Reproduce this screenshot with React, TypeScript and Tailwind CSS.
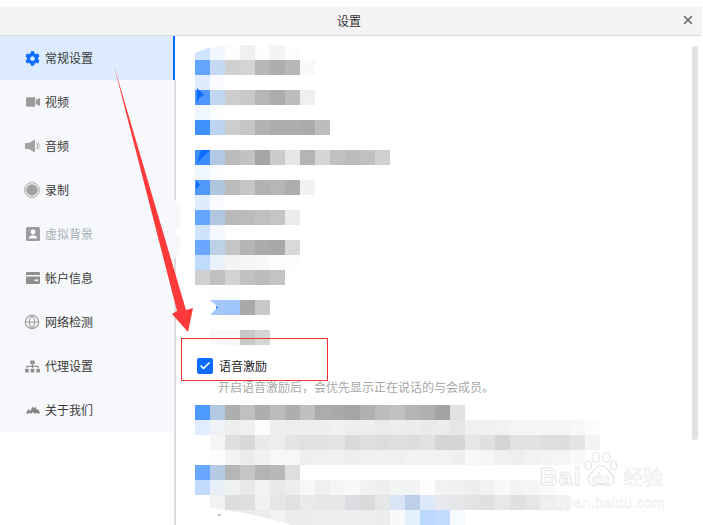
import type { ReactNode } from "react";
import { Check, Globe, X } from "lucide-react";
import { FaCog, FaSitemap, FaVideo } from "react-icons/fa";

const font = "font-['Noto_Sans_CJK_SC','Noto_Sans',sans-serif]";

// pixelated content: one string per 15px row, "-" is an empty cell
const topRows = [
  "d0e4fd f2f6fd fdfdfd f0f0f0 fdfdfd f4f4f4 fdfdfd",
  "63a4ff c6d9f3 cfcfcf d4d4d4 b6b6b6 adadad b8b8b8 f9f9f9",
  "e0ecfe f9fbff",
  "4f97ff c2d6f0 cdcdcd c9c9c9 b6b6b6 acacac bcbcbc f0f0f0",
  "eff6fe fbfdff",
  "3f91ff bcd3f2 cdcdcd c6c6c6 b2b2b2 adadad adadad ababab bdbdbd",
  "",
  "3a8cff b2c9e6 bbbbbb c2c2c2 a5a5a5 cbcbcb e6e6e6 b5b5b5 d5d5d5 c1c1c1 bcbcbc c0c0c0 d0d0d0",
  "eff6fe fbfdff",
  "5098fa b0c5de bbbbbb c5c5c5 b2b2b2 b6b6b6 adadad f1f1f1",
  "e0ecfe f9fbff",
  "64a5ff b2c6e0 b9b9b9 bbbbbb c0c0c0 c5c5c5 ebebeb",
  "cfe3fd f5f9ff",
  "6aa8ff bcd0e6 c5c5c5 b5b5b5 ababab a8a8a8 d9d9d9",
  "c0dcfb e9f1fa f4f4f4 f6f6f6 f9f9f9 fcfcfc fdfdfd",
  "d0d0d0 c0c0c0 d2d2d2 c2c2c2 bcbcbc c4c4c4",
  "- fbfdff fbfdff",
  "- a4c7fa 9fc5fb a9a9a9 c8c8c8",
  "",
  "- f8f9fb f8f8f8 c8c8c8 d5d5d5",
];

const bottomRows = [
  "4c9aff b2c8e3 aeaeae c0c0c0 aeaeae bcbcbc aeaeae bfbfbf acacac a9a9a9 a5a5a5 b0b0b0 bcbcbc c1c1c1 b5b5b5 b0b0b0 a3a3a3 e2e2e2",
  "e1ecfe eff3f7 edeeee f0f0f0 fcfcfc eeeeee eeeeee eeeeee eeeeee f1f1f1 edeeee edeeee ebebeb ededed ececec eaeaea ececec e6e6e6 f0f0f0 f0f0f0 f2f2f2 f4f6f6 f5f6f6 f4f5f5 f5f5f5 f8f8f8 fcfcfc",
  "- f5f5f5 dedfdf d7d8d8 e9eaeb eceded e3e4e4 e1e1e1 e2e2e3 e3e3e3 d9dadb dfdfdf dcdcdd dedfe0 dcddde e2e2e3 d5d5d6 d5d5d6 e6e6e8 e0e0e0 d5d5d8 e0e2e4 e0e2e4 dedfe0 dcddde e4e6e6 f3f4f4",
  "- fdfdfd f2f3f3 ebeced f0f1f1 f8f8f8 f6f7f7 eeefef eff0f0 eff0f0 eeefef eff0f0 f0f1f1 eff0f0 f2f3f3 f3f3f3 f1f2f2 eeefef f8f8f8 f5f5f5 f0f0f0 eeeeee f2f2f2 f4f4f4 f5f5f5 f9f9f9",
  "69a7ff b6cbe3 b6b6b6 c5c5c5 b4b4b4 b8b8b8 dedede",
  "c0dbfd e9eff9 eff0f0 e8e8e8 f3f3f3 e9e9e9 eeeeee f7f7f7 eff0f0 f5f5f5 f8f8f8 f2f2f2 eeeeee f3f4f4 f4f4f4 fdfdfd f1f2f2 f1f1f1 eeeeee f2f2f2 f8f8f8 f4f4f4 f6f6f6 fafafa",
  "- f1f2f2 dcdedd dedfe0 f1f1f1 e5e6e8 e0e1e3 e9eaec e6e7e7 e5e7e7 dcdde0 d9dadc e5e6e8 d9e5f5 bdd0e8 dde9fa e8e9ee e6e7e8 e2e3e3 e0e0e0 e8e8e8 e0e0e0 e6e6e6 eeeeee f2f2f2",
  "- - ebecec ebecec ebecec f3f3f3 ebecec ebecec edeeee edeeee ecedee ecedee ebecec f9f9f9 e5f0ff bdd8ff c2dbff f7fbff",
];

function Mosaic({ rows, top, children }: { rows: string[]; top: number; children?: ReactNode }) {
  return (
    <svg
      width={510}
      height={rows.length * 15}
      viewBox={`195 ${top} 510 ${rows.length * 15}`}
      className="block shrink-0"
      shapeRendering="crispEdges"
    >
      {rows.map((row, y) =>
        row
          .split(" ")
          .map((c, x) =>
            c && c !== "-" ? (
              <rect key={`${y}-${x}`} x={195 + x * 15} y={top + y * 15} width={15} height={15} fill={`#${c}`} />
            ) : null,
          ),
      )}
      <g shapeRendering="auto">{children}</g>
    </svg>
  );
}

const SpeakerIcon = () => (
  <svg width="15" height="14" viewBox="0 0 15 14">
    <path d="M0 4h3.500L10 .500v13L3.500 10H0z" fill="#a3a3a3" />
    <path d="M11.500 4.200c1.300 1.500 1.300 4.100 0 5.600" fill="none" stroke="#a8a8a8" strokeWidth="1.200" />
    <path d="M13 2.800c1.900 2.300 1.900 6.100 0 8.400" fill="none" stroke="#c4c4c4" strokeWidth="1" />
  </svg>
);

const RecordIcon = () => (
  <svg width="16" height="16" viewBox="0 0 16 16">
    <circle cx="8" cy="8" r="7.400" fill="none" stroke="#a3a3a3" strokeWidth="1" />
    <circle cx="8" cy="8" r="5.800" fill="#a0a0a0" />
  </svg>
);

const PortraitIcon = () => (
  <svg width="14" height="14" viewBox="0 0 14 14">
    <rect width="14" height="14" rx="1.500" fill="#9b9da1" />
    <circle cx="7" cy="5" r="2.400" fill="#fff" />
    <path d="M2.800 11.500c.3-2.400 2-3.200 4.200-3.200s3.900.8 4.200 3.200z" fill="#fff" />
  </svg>
);

const CardIcon = () => (
  <svg width="14" height="12" viewBox="0 0 14 12">
    <path d="M1 0h12a1 1 0 0 1 1 1v2H0V1a1 1 0 0 1 1-1z" fill="#8f8f8f" />
    <path d="M0 4.500h14V11a1 1 0 0 1-1 1H1a1 1 0 0 1-1-1z" fill="#8f8f8f" />
    <rect x="8.500" y="7.500" width="3.500" height="1.500" fill="#fff" />
  </svg>
);

const AboutIcon = () => (
  <svg width="14" height="8" viewBox="0 0 14 8">
    <path d="M0 7l2.500-4 1.700 2L6.800.500 8 2.500 9.300.500 11 4l1-1.200L14 7l-2 1-1.500-1.500L9 8 7 6 5 8 3.500 6.500 2 8z" fill="#858585" />
  </svg>
);

const navItems: { label: string; icon: ReactNode; muted?: boolean; active?: boolean }[] = [
  { label: "常规设置", icon: <FaCog size={15} color="#0b6cff" />, active: true },
  { label: "视频", icon: <FaVideo size={14} color="#9b9b9b" /> },
  { label: "音频", icon: <SpeakerIcon /> },
  { label: "录制", icon: <RecordIcon /> },
  { label: "虚拟背景", icon: <PortraitIcon />, muted: true },
  { label: "帐户信息", icon: <CardIcon /> },
  { label: "网络检测", icon: <Globe size={16} color="#999999" strokeWidth={1.6} /> },
  { label: "代理设置", icon: <FaSitemap size={15} color="#8f8f8f" /> },
  { label: "关于我们", icon: <AboutIcon /> },
];

export default function App() {
  return (
    <div className={`relative h-[525px] w-[703px] overflow-hidden bg-white pt-[7px] ${font}`}>
      <header className="relative mr-px flex h-[29px] items-center justify-center border-b border-[#dcdcdc] bg-[#f4f4f4] pb-px pr-1 text-xs text-[#333]">
        设置
        <X className="absolute right-[7px] top-[6px] h-[14px] w-[14px] text-[#666]" strokeWidth={2.5} />
      </header>

      <div className="flex">
        <aside className="h-[396px] w-[173px] shrink-0 bg-[#f7f8fb]">
          {navItems.map((item) => (
            <div
              key={item.label}
              className={`flex h-11 items-center text-xs ${item.active ? "bg-[#dcebfd]" : ""} ${item.muted ? "text-[#a9b0b8]" : "text-[#3a3a3a]"}`}
            >
              <span className="flex w-[45px] shrink-0 justify-end pr-[5px]">{item.icon}</span>
              {item.label}
            </div>
          ))}
        </aside>

        <div className="flex h-[489px] w-[3px] shrink-0 flex-col">
          <div className="h-11 w-[2px] bg-[#0b6cff]" />
          <div className="ml-px h-[123px] w-[2px] bg-[#dcdde0]" />
          <div className="ml-px h-[54px] w-[2px] bg-[#f7f8fb]" />
          <div className="ml-px flex-1 w-[2px] bg-[#dcdde0]" />
        </div>

        <main className="flex min-w-0 flex-1 flex-col pt-[9px]">
          <div className="pl-[19px]">
            <Mosaic rows={topRows} top={45}>
              <path d="M195 45v8q14-7 38-9v1z" fill="#fff" />
              <path d="M197 88l7 7-5 3-2 5z" fill="#0a6cff" />
              <path d="M197 163l13-13h-9z" fill="#0a6cff" />
              <path d="M196 180l4 5-4 4z" fill="#0a6cff" />
              <path d="M210 300l8 7-8 8z" fill="#fff" />
              <path d="M216 306l2 1-2 2z" fill="#0a6cff" />
            </Mosaic>
          </div>

          <label className="ml-[21px] mt-[13px] flex h-4 items-center text-xs text-[#222]">
            <span className="mr-[6px] flex h-4 w-4 items-center justify-center rounded-[2px] bg-[#0b6cff]">
              <Check className="h-3 w-3 text-white" strokeWidth={3.5} />
            </span>
            语音激励
          </label>
          <p className="ml-[42px] mt-[5px] whitespace-nowrap text-xs leading-4 text-[#a8a8a8]">
            开启语音激励后，会优先显示正在说话的与会成员。
          </p>

          <div className="mt-[10px] pl-[19px]">
            <Mosaic rows={bottomRows} top={405}>
              <path d="M195 525v-17h18l18 3q30 4 60 14z" fill="#fff" />
              <path d="M218 514h3v2h-3z" fill="#c4c4c4" />
            </Mosaic>
          </div>
        </main>
      </div>

      {/* smudged patch over the divider */}
      <div className="absolute left-[172px] top-[200px] h-[30px] w-2 rounded-r-[6px] bg-[#f7f8fb]" />
      <div className="absolute left-[172px] top-[236px] h-[22px] w-2 rounded-r-[6px] bg-[#f7f8fb]" />

      {/* scrollbar */}
      <div className="absolute left-[692px] top-[46px] h-[394px] w-[6px] rounded-[3px] bg-[#e1e1e6]" />

      {/* annotation */}
      <div className="absolute left-[181px] top-[338px] h-[43px] w-[147px] border border-[#ee3333]" />
      <svg className="absolute left-0 top-0" width="703" height="525" viewBox="0 0 703 525">
        <path d="M114 66L186 310 193 308 188 332 172 314 177 311z" fill="#ff3a3a" />
      </svg>

      {/* watermark */}
      <div className="absolute left-[540px] top-[450px] h-[62px] w-[130px] text-white">
        <span className="absolute left-0 top-[15px] font-['Liberation_Sans',sans-serif] text-[24px] font-bold leading-6 tracking-[1.5px] [-webkit-text-stroke:1px_#e6e6e6]">Bai</span>
        <svg className="absolute left-[43px] top-0" width="36" height="40" viewBox="0 0 40 40" fill="#fff" stroke="#e2e2e2" strokeWidth="1.200">
          <ellipse cx="6" cy="15" rx="3.500" ry="5" />
          <ellipse cx="14" cy="6" rx="4" ry="5.500" />
          <ellipse cx="26" cy="6" rx="4" ry="5.500" />
          <ellipse cx="34" cy="15" rx="3.500" ry="5" />
          <path d="M20 15c6 0 8 6 12 10 5 5 1 13-6 12-3-.5-4-1-6-1s-3 .5-6 1c-7 1-11-7-6-12 4-4 6-10 12-10z" />
        </svg>
        <span className="absolute left-[52px] top-[21px] font-['Liberation_Sans',sans-serif] text-[14px] font-bold leading-4 [-webkit-text-stroke:0.5px_#e0e0e0]">du</span>
        <span className="absolute left-[83px] top-[17px] text-[20px] leading-5 [-webkit-text-stroke:0.5px_#e6e6e6]">经验</span>
        <span className="absolute left-[2px] top-[45px] font-['Liberation_Sans',sans-serif] text-[14px] leading-4 tracking-[0.6px] [-webkit-text-stroke:0.4px_#e8e8e8]">jingyan.baidu.com</span>
      </div>
    </div>
  );
}
